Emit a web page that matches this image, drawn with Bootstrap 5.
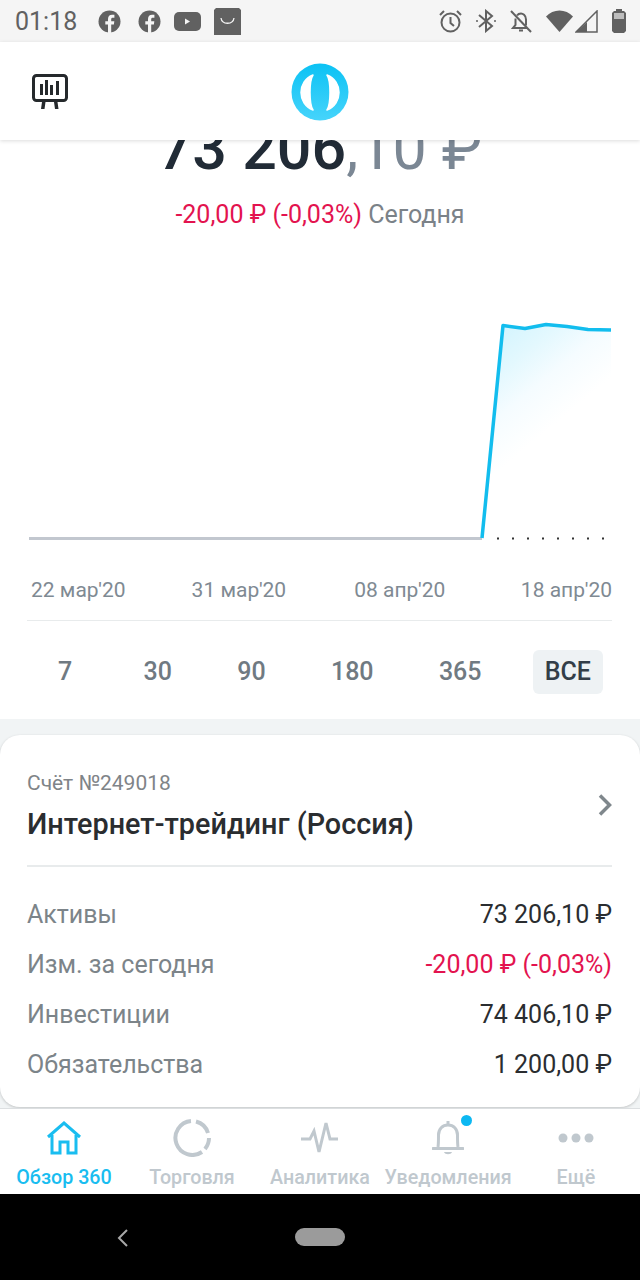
<!DOCTYPE html>
<html lang="ru">
<head>
  <meta charset="UTF-8" />
  <meta name="viewport" content="width=device-width, initial-scale=1.0"/>
  <title>Обзор 360</title>
  <link href="https://cdn.jsdelivr.net/npm/bootstrap@5.3.3/dist/css/bootstrap.min.css" rel="stylesheet" />
  <style>
    html, body { height: 1280px; overflow: hidden; }
    body { width: 640px; font-family: Roboto, "Liberation Sans", sans-serif; background: #f1f4f5; color: #212b36; }
    .status-bar { height: 42px; background: #f5f5f5; color: #616161; padding: 0 14px 0 15px; }
    .status-time { font-size: 25px; line-height: 1; width: 62px; margin-right: 21px; }
    .status-left { gap: 13px; }
    .status-right svg + svg { margin-left: 14px; }
    .status-right svg.sig-ico { margin-left: 2px; }
    .app-head { height: 98px; background: #fff; padding-left: 32px; box-shadow: 0 1px 4px rgba(0,0,0,.14); z-index: 5; position: relative; }
    .head-logo { left: 291px; top: 21px; position: absolute; }
    .screen { height: 968px; overflow: hidden; position: relative; }
    .hero { background: #fff; height: 579px; overflow: hidden; }
    .hero-amount { font-size: 61px; font-weight: 500; line-height: 66px; margin-top: -25px; color: #212b36; }
    .hero-amount span { color: #7b8794; font-weight: 400; }
    .hero-change { font-size: 25px; line-height: 30px; margin-top: 19px; color: #7b8288; }
    .txt-down { color: #e3134f; }
    .chart-box { margin-top: 11px; }
    .axis-row { padding: 0 28px 0 31px; font-size: 21px; line-height: 26px; color: #7f8a93; height: 43px; }
    .axis-row span:nth-child(2) { margin-left: 66px; }
    .axis-row span:nth-child(3) { margin-left: 68px; }
    .axis-row span:nth-child(4) { margin-left: auto; }
    .rule-line { height: 1px; background: #e8ebec; margin: 0 28px 0 27px; }
    .range-row { padding: 29px 0 0 46px; gap: 41.3px; }
    .range-item { font-size: 25px; font-weight: 500; line-height: 44px; color: #707a82; padding: 0 12px; border-radius: 6px; }
    .range-item:first-child { margin-right: 6px; }
    .range-item.is-on { background: #eef2f4; color: #333e48; margin-left: -2px; width: 70px; padding: 0; text-align: center; }
    .acc-card { background: #fff; border-radius: 20px; margin-top: 16px; height: 372px; padding: 33px 28px 0 27px; box-shadow: 0 1px 3px rgba(0,0,0,.2); }
    .acc-num { font-size: 21px; line-height: 30px; color: #7f8488; }
    .acc-name { font-size: 28.8px; font-weight: 500; line-height: 36px; margin-top: 8px; color: #2a2d30; }
    .acc-head { height: 99px; border-bottom: 2px solid #e8ebec; }
    .acc-arrow { margin-top: 26px; }
    .acc-rows { padding-top: 22.5px; }
    .acc-line { font-size: 25px; line-height: 50.2px; color: #2a2d30; }
    .acc-line .acc-key { color: #7c8489; }
    .tab-bar { height: 86px; background: #fff; border-top: 1px solid #dcdfe1; }
    .tab-item { width: 128px; font-size: 19.7px; font-weight: 500; line-height: 24px; color: #c0c8ce; position: relative; }
    .tab-item.is-on { color: #19bdf0; }
    .tab-ico { height: 57px; }
    .tab-dot { position: absolute; width: 11px; height: 11px; border-radius: 50%; background: #0cb8f2; left: 77px; top: 6px; }
    .sys-bar { height: 86px; background: #000; }
    .sys-pill { width: 50px; height: 18px; border-radius: 9px; background: #9b9b9b; }
    .sys-back { left: 116px; top: 1229px; position: absolute; }
  </style>
</head>
<body>
  <div class="status-bar d-flex align-items-center">
    <div class="status-time">01:18</div>
    <div class="status-left d-flex align-items-center">
      <svg class="me-1" width="23" height="23" viewBox="0 0 23 23"><circle cx="11.5" cy="11.5" r="11" fill="#616161"/><path d="M10 23v-8.500H7.300v-3.300H10V9c0-2.800 1.600-4.300 4.100-4.300 1.100 0 2 .1 2.300.1v2.900h-1.600c-1.300 0-1.600.6-1.600 1.500v2h3.100l-.4 3.300h-2.700V23z" fill="#f5f5f5"/></svg>
      <svg width="23" height="23" viewBox="0 0 23 23"><circle cx="11.500" cy="11.500" r="11" fill="#616161"/><path d="M10 23v-8.500H7.300v-3.300H10V9c0-2.800 1.600-4.300 4.100-4.300 1.100 0 2 .1 2.300.1v2.900h-1.600c-1.300 0-1.600.6-1.600 1.500v2h3.100l-.4 3.300h-2.700V23z" fill="#f5f5f5"/></svg>
      <svg width="27" height="19" viewBox="0 0 27 19"><rect width="27" height="19" rx="5" fill="#616161"/><path d="M11 6.500v6l5-3z" fill="#f5f5f5"/></svg>
      <svg width="27" height="27" viewBox="0 0 27 27"><path d="M2 0h23l2 2v25H0V2z" fill="#616161"/><path d="M7 10c1 7 12 7 13 0" fill="none" stroke="#f5f5f5" stroke-width="1.300"/></svg>
    </div>
    <div class="status-right d-flex align-items-center ms-auto">
      <svg width="23" height="23" viewBox="0 0 23 23" fill="none" stroke="#616161" stroke-width="2"><circle cx="11.500" cy="12.500" r="9"/><path d="M11.500 7v6l3.500 3M1 5l4-4M22 5l-4-4"/></svg>
      <svg width="20" height="24" viewBox="0 0 20 24" fill="none" stroke="#616161" stroke-width="2"><path d="M3 6l13 11-6 5V2l6 5L3 18"/><circle cx="1" cy="12" r="1" fill="#616161" stroke="none"/><circle cx="19" cy="12" r="1" fill="#616161" stroke="none"/></svg>
      <svg width="22" height="23" viewBox="0 0 22 23" fill="none" stroke="#616161" stroke-width="2"><path d="M1 1l20 21"/><path d="M7 5.500c1-1.500 2.500-2 4-2s5 1.500 5 6v6M5.500 8.500V15L3 18h14M9 20.500h4"/></svg>
      <svg width="27" height="22" viewBox="0 0 27 22"><path d="M0 6.500C7-1.500 20-1.500 27 6.500L13.500 22z" fill="#616161"/></svg>
      <svg class="sig-ico" width="23" height="23" viewBox="0 0 23 23"><path d="M22 1v21H1z" fill="none" stroke="#616161" stroke-width="1.500"/><path d="M12 12v10H1z" fill="#616161"/></svg>
      <svg width="14" height="24" viewBox="0 0 14 24"><path d="M4 0h6v2h2l2 2v18l-2 2H2l-2-2V4l2-2h2z" fill="#616161"/><rect x="2" y="4" width="10" height="6" fill="#bdbdbd"/></svg>
    </div>
  </div>

  <div class="app-head d-flex align-items-center">
    <svg width="36" height="36" viewBox="0 0 36 36" fill="none"><rect x="1.500" y="2.500" width="33" height="25" rx="3" stroke="#25292c" stroke-width="3"/><path d="M8 22V11h3v11zM13 22V7h3v15zM18 22V12h3v10zM24 22V8h3v14z" fill="#25292c"/><path d="M9 36l1-7h3.500l-1 7zM26.500 36l-1-7H22l1 7z" fill="#25292c"/></svg>
    <svg class="head-logo" width="58" height="58" viewBox="0 0 58 58">
      <defs><linearGradient id="lg" x1="0" y1="0" x2="0" y2="1"><stop offset="0" stop-color="#0cc2f4"/><stop offset="1" stop-color="#46d4fb"/></linearGradient></defs>
      <circle cx="29" cy="29" r="28.500" fill="url(#lg)"/>
      <path d="M22 12C6 18 6 41 22 47C18 41 18 18 22 12z" fill="#fff" stroke="#fff" stroke-width="1.500" stroke-linejoin="round"/>
      <path d="M36 12c16 6 16 29 0 35c4-6 4-29 0-35z" fill="#fff" stroke="#fff" stroke-width="1.500" stroke-linejoin="round"/>
    </svg>
  </div>

  <div class="screen">
    <div class="hero">
      <div class="hero-amount text-center">73 206<span>,10 ₽</span></div>
      <div class="hero-change text-center"><span class="txt-down">-20,00 ₽ (-0,03%)</span> Сегодня</div>
      <svg class="chart-box d-block" width="640" height="336" viewBox="0 0 640 336">
        <defs><linearGradient id="cf" x1="0" y1="0" x2=".4" y2=".8"><stop offset="0" stop-color="#cdf3fe"/><stop offset=".3" stop-color="#e3f8fe"/><stop offset=".5" stop-color="#f5fcff"/><stop offset=".75" stop-color="#fff"/></linearGradient></defs>
        <path d="M482 297L503 84l22 3 21-4 21 2 21 3 23 1v208z" fill="url(#cf)"/>
        <path d="M29 297.500h453" stroke="#c2c7cf" stroke-width="3"/>
        <path d="M482 297L503 84.500l22 3 21-4 21 2 21 3 23 .500" fill="none" stroke="#12bdee" stroke-width="3.500" stroke-linejoin="round"/>
        <path d="M497 297.500h110" stroke="#333" stroke-width="2" stroke-dasharray="2 13"/>
      </svg>
      <div class="axis-row d-flex"><span>22 мар'20</span><span>31 мар'20</span><span>08 апр'20</span><span>18 апр'20</span></div>
      <div class="rule-line"></div>
      <div class="range-row d-flex align-items-center">
        <div class="range-item">7</div><div class="range-item">30</div><div class="range-item">90</div><div class="range-item">180</div><div class="range-item">365</div><div class="range-item is-on">ВСЕ</div>
      </div>
    </div>
    <div class="acc-card">
      <div class="acc-head d-flex justify-content-between">
        <div>
          <div class="acc-num">Счёт №249018</div>
          <div class="acc-name">Интернет-трейдинг (Россия)</div>
        </div>
        <svg class="acc-arrow" width="14" height="22" viewBox="0 0 14 22" fill="none"><path d="M2 1.500l9.500 9.500L2 20.500" stroke="#7f878c" stroke-width="3.500"/></svg>
      </div>
      <div class="acc-rows">
        <div class="acc-line d-flex justify-content-between"><span class="acc-key">Активы</span><span>73 206,10 ₽</span></div>
        <div class="acc-line d-flex justify-content-between"><span class="acc-key">Изм. за сегодня</span><span class="txt-down">-20,00 ₽ (-0,03%)</span></div>
        <div class="acc-line d-flex justify-content-between"><span class="acc-key">Инвестиции</span><span>74 406,10 ₽</span></div>
        <div class="acc-line d-flex justify-content-between"><span class="acc-key">Обязательства</span><span>1 200,00 ₽</span></div>
      </div>
    </div>
  </div>

  <div class="tab-bar d-flex">
    <div class="tab-item is-on text-center">
      <div class="tab-ico d-flex align-items-center justify-content-center"><svg width="34" height="34" viewBox="0 0 34 34" fill="none" stroke="#19bdf0" stroke-width="3"><path d="M1 16L17 2l16 14M5 14v18h8V21h8v11h8V14"/></svg></div>
      Обзор 360
    </div>
    <div class="tab-item text-center">
      <div class="tab-ico d-flex align-items-center justify-content-center"><svg width="38" height="38" viewBox="0 0 38 38" fill="none" stroke="#c0c8ce" stroke-width="4"><path d="M23 2.500A17 17 0 0 1 35 14M36 19a17 17 0 0 1-4 11M29 33A17 17 0 1 1 18 2"/></svg></div>
      Торговля
    </div>
    <div class="tab-item text-center">
      <div class="tab-ico d-flex align-items-center justify-content-center"><svg width="38" height="34" viewBox="0 0 38 34" fill="none" stroke="#c0c8ce" stroke-width="3"><path d="M0 18h9l4-8 5 21 7-29 4 16h8"/></svg></div>
      Аналитика
    </div>
    <div class="tab-item text-center">
      <div class="tab-ico d-flex align-items-center justify-content-center"><svg width="32" height="36" viewBox="0 0 32 36" fill="none" stroke="#c0c8ce"><path d="M16 1v4" stroke-width="3"/><path d="M6 27c.500-3 .500-7 .500-12 0-6 4-10 9.500-10s9.500 4 9.500 10c0 5 0 9 .500 12" stroke-width="3"/><path d="M1 28.500h30" stroke-width="3" stroke-linecap="round"/><path d="M12 32c1 3 7 3 8 0z" fill="#c0c8ce" stroke="none"/></svg></div>
      <span class="tab-dot"></span>
      Уведомления
    </div>
    <div class="tab-item text-center">
      <div class="tab-ico d-flex align-items-center justify-content-center"><svg width="36" height="10" viewBox="0 0 36 10" fill="#c0c8ce"><circle cx="5" cy="5" r="4.500"/><circle cx="18" cy="5" r="4.500"/><circle cx="31" cy="5" r="4.500"/></svg></div>
      Ещё
    </div>
  </div>

  <div class="sys-bar d-flex align-items-center justify-content-center">
    <div class="sys-pill"></div>
  </div>
  <svg class="sys-back" width="14" height="18" viewBox="0 0 14 18" fill="none"><path d="M11 1L3 9l8 8" stroke="#a8a8a8" stroke-width="2"/></svg>
</body>
</html>
